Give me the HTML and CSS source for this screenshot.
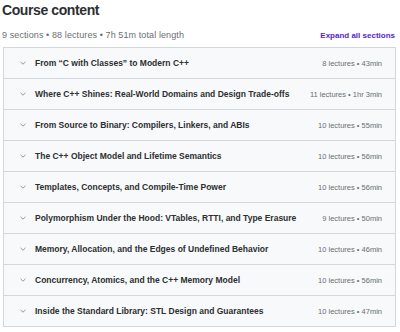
FILE: index.html
```html
<!DOCTYPE html>
<html lang="en">
<head>
    <meta charset="UTF-8">
    <meta name="viewport" content="width=device-width, initial-scale=1.0">
    <title>Course content</title>
    <link rel="stylesheet" href="styles.css">
</head>
<body>
    <h2 class="title">Course content</h2>

    <div class="summary">
        <span>9 sections • 88 lectures • 7h 51m total length</span>
        <a class="expand" href="#">Expand all sections</a>
    </div>

    <div class="sections">
        <div class="section">
            <span class="chevron"><svg width="6" height="4" viewBox="0 0 6 4"><path d="M0.5 0.8l2.5 2.4 2.5-2.4" fill="none" stroke="#8a8f93" stroke-width="0.9"/></svg></span>
            <span class="name">From “C with Classes” to Modern C++</span>
            <span class="meta">8 lectures • 43min</span>
        </div>
        <div class="section">
            <span class="chevron"><svg width="6" height="4" viewBox="0 0 6 4"><path d="M0.5 0.8l2.5 2.4 2.5-2.4" fill="none" stroke="#8a8f93" stroke-width="0.9"/></svg></span>
            <span class="name">Where C++ Shines: Real-World Domains and Design Trade-offs</span>
            <span class="meta">11 lectures • 1hr 3min</span>
        </div>
        <div class="section">
            <span class="chevron"><svg width="6" height="4" viewBox="0 0 6 4"><path d="M0.5 0.8l2.5 2.4 2.5-2.4" fill="none" stroke="#8a8f93" stroke-width="0.9"/></svg></span>
            <span class="name">From Source to Binary: Compilers, Linkers, and ABIs</span>
            <span class="meta">10 lectures • 55min</span>
        </div>
        <div class="section">
            <span class="chevron"><svg width="6" height="4" viewBox="0 0 6 4"><path d="M0.5 0.8l2.5 2.4 2.5-2.4" fill="none" stroke="#8a8f93" stroke-width="0.9"/></svg></span>
            <span class="name">The C++ Object Model and Lifetime Semantics</span>
            <span class="meta">10 lectures • 56min</span>
        </div>
        <div class="section">
            <span class="chevron"><svg width="6" height="4" viewBox="0 0 6 4"><path d="M0.5 0.8l2.5 2.4 2.5-2.4" fill="none" stroke="#8a8f93" stroke-width="0.9"/></svg></span>
            <span class="name">Templates, Concepts, and Compile-Time Power</span>
            <span class="meta">10 lectures • 56min</span>
        </div>
        <div class="section">
            <span class="chevron"><svg width="6" height="4" viewBox="0 0 6 4"><path d="M0.5 0.8l2.5 2.4 2.5-2.4" fill="none" stroke="#8a8f93" stroke-width="0.9"/></svg></span>
            <span class="name">Polymorphism Under the Hood: VTables, RTTI, and Type Erasure</span>
            <span class="meta">9 lectures • 50min</span>
        </div>
        <div class="section">
            <span class="chevron"><svg width="6" height="4" viewBox="0 0 6 4"><path d="M0.5 0.8l2.5 2.4 2.5-2.4" fill="none" stroke="#8a8f93" stroke-width="0.9"/></svg></span>
            <span class="name">Memory, Allocation, and the Edges of Undefined Behavior</span>
            <span class="meta">10 lectures • 46min</span>
        </div>
        <div class="section">
            <span class="chevron"><svg width="6" height="4" viewBox="0 0 6 4"><path d="M0.5 0.8l2.5 2.4 2.5-2.4" fill="none" stroke="#8a8f93" stroke-width="0.9"/></svg></span>
            <span class="name">Concurrency, Atomics, and the C++ Memory Model</span>
            <span class="meta">10 lectures • 56min</span>
        </div>
        <div class="section">
            <span class="chevron"><svg width="6" height="4" viewBox="0 0 6 4"><path d="M0.5 0.8l2.5 2.4 2.5-2.4" fill="none" stroke="#8a8f93" stroke-width="0.9"/></svg></span>
            <span class="name">Inside the Standard Library: STL Design and Guarantees</span>
            <span class="meta">10 lectures • 47min</span>
        </div>
    </div>
</body>
</html>
```

FILE: styles.css
```css
body {
    margin: 0;
    padding: 0 4px 0 3px;
    background: #ffffff;
    color: #2d2f31;
    font-family: "Liberation Sans", Arial, sans-serif;
}
.title {
    margin: 0 0 0 -1px;
    padding: 1px 0 0 0;
    font-size: 14px;
    line-height: 18px;
    font-weight: bold;
    letter-spacing: -0.4px;
    color: #2d2f31;
}
.summary {
    display: flex;
    justify-content: space-between;
    align-items: center;
    margin-top: 9px;
    height: 14px;
    font-size: 9px;
    color: #6a6f73;
}
.summary span {
    margin-left: -1px;
    letter-spacing: 0.1px;
}
.expand {
    font-size: 8px;
    font-weight: bold;
    color: #5624d0;
    text-decoration: none;
    margin-right: 1px;
}
.sections {
    margin-top: 5px;
    border: 1px solid #d1d7dc;
    border-bottom: none;
}
.section {
    display: flex;
    align-items: center;
    height: 30px;
    background: #f7f9fa;
    border-bottom: 1px solid #d1d7dc;
    padding: 0 13px 0 16px;
}
.chevron {
    display: flex;
    width: 15px;
}
.name {
    flex: 1;
    font-size: 8.5px;
    font-weight: bold;
    color: #2d2f31;
}
.meta {
    font-size: 7.5px;
    color: #6a6f73;
}
```
